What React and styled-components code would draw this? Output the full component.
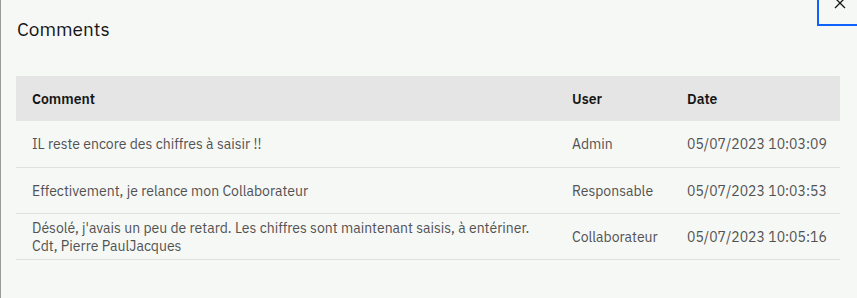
import React from "react";
import styled, { createGlobalStyle } from "styled-components";

const Global = createGlobalStyle`
  html, body { margin: 0; padding: 0; background: #f6f8f6; }
  body { font-family: "IBM Plex Sans", Roboto, "Noto Sans", sans-serif; }
  #root { width: 857px; height: 298px; overflow: hidden; }
`;

const Modal = styled.div`
  position: relative;
  box-sizing: border-box;
  width: 857px;
  height: 298px;
  background: #f6f8f6;
  border-left: 1px solid #9a9a9a;
  padding: 15px 17px 0 15px;
  overflow: hidden;
`;

const Title = styled.h2`
  margin: 0;
  font-size: 19px;
  line-height: 28px;
  font-weight: 400;
  color: #161616;
  padding-left: 1px;
`;

const Close = styled.button`
  position: absolute;
  top: -22px;
  left: 816px;
  width: 46px;
  height: 48px;
  box-sizing: border-box;
  border: 2px solid #0f62fe;
  background: transparent;
  display: flex;
  align-items: center;
  justify-content: center;
  padding: 0;
  color: #161616;
  cursor: pointer;
`;

const Table = styled.div`
  margin-top: 33px;
  display: grid;
  grid-template-columns: 1fr 115px 169px;
  font-size: 14px;
  line-height: 18px;
`;

const HeadCell = styled.div`
  background: #e5e5e5;
  height: 45px;
  display: flex;
  align-items: center;
  padding-left: 16px;
  font-weight: 600;
  color: #161616;
`;

const Cell = styled.div`
  min-height: ${(p) => p.$h}px;
  display: flex;
  align-items: center;
  padding-left: 16px;
  padding-right: 8px;
  color: #525252;
  border-bottom: 1px solid #e0e0e0;
`;

const rows = [
  { c: "IL reste encore des chiffres à saisir !!", u: "Admin", d: "05/07/2023 10:03:09", h: 46 },
  { c: "Effectivement, je relance mon Collaborateur", u: "Responsable", d: "05/07/2023 10:03:53", h: 45 },
  {
    c: (
      <span>
        Désolé, j'avais un peu de retard. Les chiffres sont maintenant saisis, à entériner.
        <br />
        Cdt, Pierre PaulJacques
      </span>
    ),
    u: "Collaborateur",
    d: "05/07/2023 10:05:16",
    h: 45,
  },
];

export default function App() {
  return (
    <>
      <Global />
      <Modal>
        <Title>Comments</Title>
        <Close aria-label="Close">
          <svg width="16" height="16" viewBox="0 0 16 16" style={{ marginTop: 2 }}>
            <path d="M3 3 L13 13 M13 3 L3 13" stroke="#161616" strokeWidth="1.3" />
          </svg>
        </Close>
        <Table>
          <HeadCell>Comment</HeadCell>
          <HeadCell>User</HeadCell>
          <HeadCell>Date</HeadCell>
          {rows.map((r, i) => (
            <React.Fragment key={i}>
              <Cell $h={r.h}>{r.c}</Cell>
              <Cell $h={r.h}>{r.u}</Cell>
              <Cell $h={r.h}>{r.d}</Cell>
            </React.Fragment>
          ))}
        </Table>
      </Modal>
    </>
  );
}
